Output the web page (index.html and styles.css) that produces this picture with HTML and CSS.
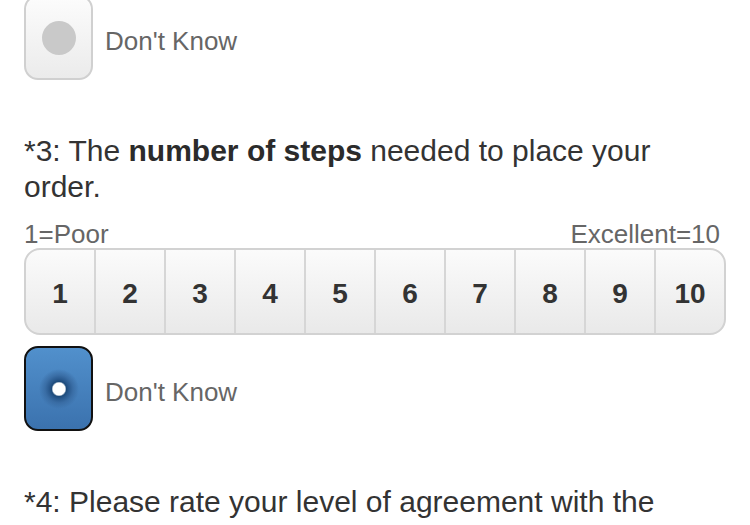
FILE: index.html
```html
<!DOCTYPE html>
<html lang="en">
<head>
    <meta charset="UTF-8">
    <meta name="viewport" content="width=device-width, initial-scale=1.0">
    <title>Survey</title>
    <link rel="stylesheet" href="styles.css">
</head>
<body>
    <div class="survey">
        <label class="dont-know">
            <span class="radio-box"><span class="dot"></span></span>
            <span class="dk-label">Don't Know</span>
        </label>

        <div class="question">
            <p class="q-title">*3: The <strong>number of steps</strong> needed to place your order.</p>
            <div class="scale-labels">
                <span>1=Poor</span>
                <span>Excellent=10</span>
            </div>
            <div class="scale">
                <span class="scale-btn">1</span>
                <span class="scale-btn">2</span>
                <span class="scale-btn">3</span>
                <span class="scale-btn">4</span>
                <span class="scale-btn">5</span>
                <span class="scale-btn">6</span>
                <span class="scale-btn">7</span>
                <span class="scale-btn">8</span>
                <span class="scale-btn">9</span>
                <span class="scale-btn">10</span>
            </div>
            <label class="dont-know selected">
                <span class="radio-box"><span class="dot"></span></span>
                <span class="dk-label">Don't Know</span>
            </label>
        </div>

        <div class="question">
            <p class="q-title">*4: Please rate your level of agreement with the following statements.</p>
        </div>
    </div>
</body>
</html>
```

FILE: styles.css
```css
body {
    font-family: "Liberation Sans", Arial, sans-serif;
    background-color: #fff;
    margin: 0;
    padding: 0 24px;
}
.survey {
    margin-top: -5px;
}
.dont-know {
    display: flex;
    align-items: center;
}
.radio-box {
    width: 69px;
    height: 85px;
    box-sizing: border-box;
    border: 2px solid #d0d0d0;
    border-radius: 14px;
    background: linear-gradient(#fcfcfc, #ebebeb);
    display: flex;
    align-items: center;
    justify-content: center;
}
.dot {
    width: 34px;
    height: 34px;
    border-radius: 50%;
    background-color: #c9c9c9;
}
.dk-label {
    margin-left: 12px;
    padding-top: 7px;
    font-size: 26px;
    color: #666;
}
.selected {
    margin-top: 11px;
}
.selected .radio-box {
    border-color: #111;
    background: linear-gradient(#5190cc, #3b72ae);
}
.selected .dot {
    width: 40px;
    height: 40px;
    background: radial-gradient(circle, #fff 0, #fff 6px, #1d4b7b 7.5px, #2a5a8f 10px, rgba(55, 105, 160, 0.8) 14px, rgba(72, 130, 190, 0) 20px);
}
.question {
    padding-top: 53px;
}
.q-title {
    margin: 0;
    font-size: 30px;
    line-height: 36px;
    color: #333;
}
.q-title strong {
    color: #2b2b2b;
}
.scale-labels {
    display: flex;
    justify-content: space-between;
    margin-top: 15px;
    padding-right: 6px;
    font-size: 26px;
    line-height: 28px;
    color: #666;
}
.scale {
    display: flex;
    height: 87px;
    box-sizing: border-box;
    border: 2px solid #d2d2d2;
    border-radius: 16px;
    overflow: hidden;
    background: linear-gradient(#fbfbfb, #e9e9e9);
}
.scale-btn {
    flex: 1;
    display: flex;
    align-items: center;
    justify-content: center;
    padding-top: 5px;
    font-size: 28px;
    font-weight: bold;
    color: #333;
    border-left: 2px solid #d6d6d6;
}
.scale-btn:first-child {
    border-left: none;
}
```
